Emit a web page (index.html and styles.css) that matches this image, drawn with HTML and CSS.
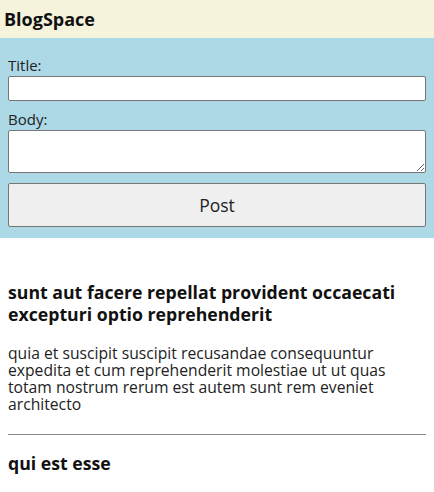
FILE: index.html
```html
<!DOCTYPE html>
<html>
<head>
<meta charset="utf-8">
<link rel="stylesheet" href="styles.css">
</head>
<body>
<header class="top">
  <h1 class="brand">BlogSpace</h1>
</header>
<form class="new-post">
  <label class="lbl" for="title">Title:</label>
  <input class="field" id="title" type="text">
  <label class="lbl" for="body">Body:</label>
  <textarea class="field area" id="body"></textarea>
  <button class="btn" type="button">Post</button>
</form>
<main class="posts">
  <article class="post">
    <h3 class="post-title">sunt aut facere repellat provident occaecati excepturi optio reprehenderit</h3>
    <p class="post-body">quia et suscipit suscipit recusandae consequuntur expedita et cum reprehenderit molestiae ut ut quas totam nostrum rerum est autem sunt rem eveniet architecto</p>
    <hr class="sep">
  </article>
  <article class="post">
    <h3 class="post-title">qui est esse</h3>
  </article>
</main>
</body>
</html>
```
FILE: styles.css
```css
html, body {
  margin: 0;
  padding: 0;
  font-family: "Open Sans", Lato, sans-serif;
  color: #1a1a1a;
}
.top {
  background: #f5f3dc;
  height: 38px;
  display: flex;
  align-items: center;
  padding: 0 4px;
}
.brand {
  margin: 0;
  font-size: 18px;
  font-weight: 700;
  color: #111;
}
.new-post {
  background: #add8e6;
  display: flex;
  flex-direction: column;
  padding: 19px 8px 11px;
}
.lbl {
  font-size: 15px;
  line-height: 17px;
  color: #222;
}
.field {
  box-sizing: border-box;
  width: 100%;
  height: 25px;
  margin: 2px 0 10px;
  border: 1px solid #767676;
  border-radius: 2px;
  background: #fff;
  font: inherit;
}
.area {
  height: 43px;
  margin-bottom: 10px;
}
.btn {
  height: 44px;
  border: 1px solid #767676;
  border-radius: 2px;
  background: #efefef;
  font-family: inherit;
  font-size: 17.5px;
  color: #222;
}
.posts {
  padding: 43px 8px 0;
}
.post-title {
  margin: 0 0 20px;
  font-size: 17.7px;
  line-height: 22px;
  font-weight: 700;
  color: #111;
}
.post-body {
  margin: 0 0 21px;
  font-size: 15.7px;
  line-height: 17px;
  color: #222;
}
.sep {
  margin: 0 0 17px;
  border: 0;
  border-top: 1px solid #8a8a8a;
}
```
